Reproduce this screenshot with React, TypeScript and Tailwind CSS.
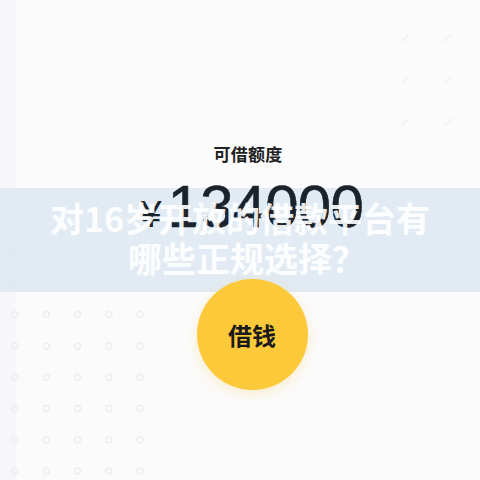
const dotRows: number[][] = [
  [0, 1],
  [0, 1, 2, 3],
  [0, 1, 2, 3, 4],
  [0, 1, 2, 3, 4],
  [0, 1, 2, 3, 4],
  [0, 1, 2, 3, 4],
  [0, 1, 2, 3, 4],
  [0, 1, 2, 3, 4],
];

function DotGrid() {
  return (
    <svg className="absolute left-0 top-0" width="480" height="480">
      {dotRows.map((cols, r) =>
        cols.map((c) => (
          <circle
            key={`${r}-${c}`}
            cx={15 + c * 31.3}
            cy={252 + r * 31.3}
            r="3"
            fill="none"
            stroke="#eeeef1"
            strokeWidth="1.5"
          />
        ))
      )}
      {[38, 80, 122].map((y) =>
        [405, 448].map((x) => (
          <path
            key={`${x}-${y}`}
            d={`M${x - 3} ${y + 3} L${x + 3} ${y - 3}`}
            stroke="#f3f3f5"
            strokeWidth="2"
            strokeLinecap="round"
          />
        ))
      )}
    </svg>
  );
}

export default function App() {
  return (
    <div
      className="relative w-[480px] h-[480px] overflow-hidden bg-[#fbfbfc]"
      style={{ fontFamily: '"Noto Sans CJK SC", "Liberation Sans", sans-serif' }}
    >
      <div className="absolute left-0 top-0 h-full w-[16px] bg-[#f7f7f9]" />
      <DotGrid />

      {/* overlay band behind the amount */}
      <div className="absolute left-0 top-[188px] h-[104px] w-full bg-[#dde8f1]/85" />

      <div className="relative flex flex-col items-center pt-[142px]">
        <div className="ml-[16px] text-[17px] font-bold leading-[24px] text-[#222] tracking-[0.3px]">
          可借额度
        </div>
        <div className="mt-[16px] ml-[24px] flex items-baseline text-[#1a232c]">
          <span className="mr-[6px] font-['Liberation_Sans'] text-[37px] leading-none">¥</span>
          <span className="font-['Liberation_Sans'] text-[60px] leading-[50px] tracking-[-0.8px] [-webkit-text-stroke:0.6px_#1a232c]">
            134000
          </span>
        </div>
        <div className="mt-[46px] ml-[24px] flex h-[111px] w-[111px] items-center justify-center rounded-full bg-[#fbc93a] shadow-[0_4px_14px_rgba(250,200,60,0.25)]">
          <span className="text-[24px] font-bold text-[#1a1a1a]">借钱</span>
        </div>
      </div>

      <div className="absolute left-0 top-[198px] flex w-full flex-col items-center text-[34px] font-bold leading-[40px] text-white/90">
        <div>对16岁开放的借款平台有</div>
        <div className="ml-[14px]">哪些正规选择？</div>
      </div>
    </div>
  );
}
